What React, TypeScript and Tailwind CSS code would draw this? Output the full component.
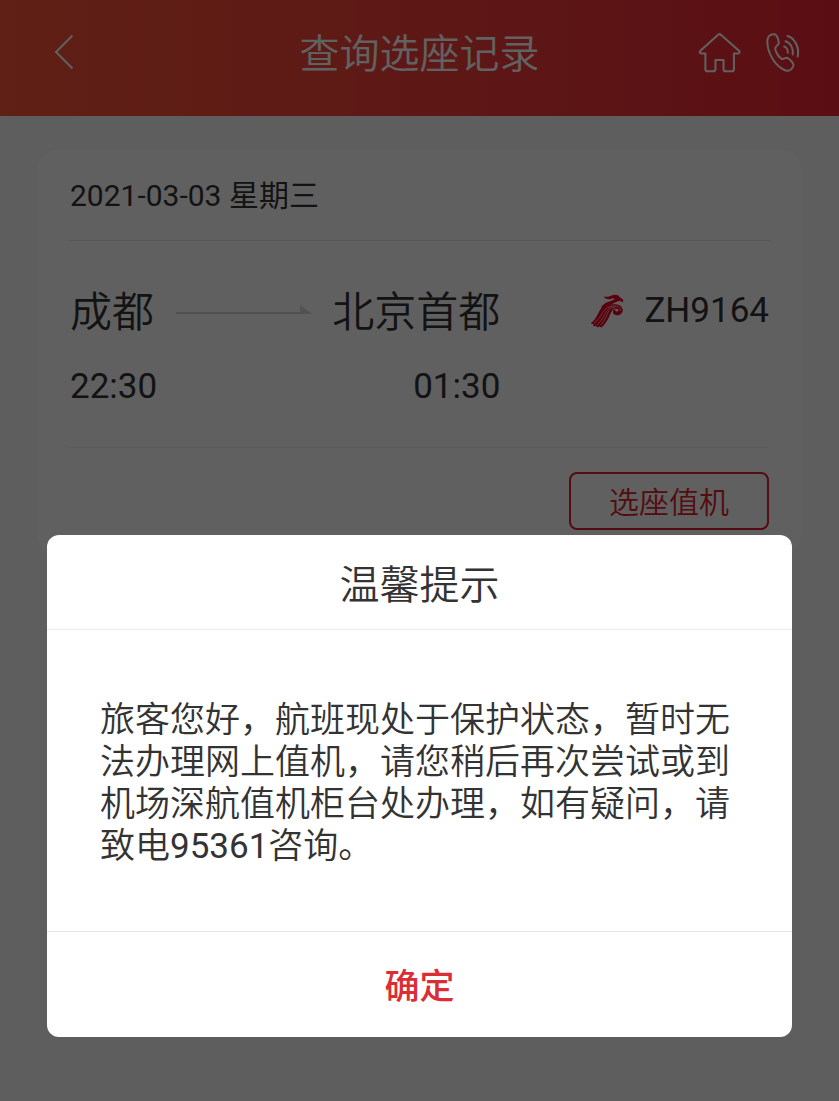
import React, { useState } from 'react';

function BackIcon() {
  return (
    <svg className="h-9 w-5" viewBox="0 0 20 36" fill="none" stroke="currentColor" strokeWidth="2">
      <path d="M18.5 1.5 2 18l16.500 16.500" />
    </svg>
  );
}

function HomeIcon() {
  return (
    <svg className="h-[41px] w-[43px]" viewBox="56 92 128 122" fill="none" stroke="currentColor" strokeWidth="6" strokeLinejoin="round">
      <path d="M116 100Q120 96.500 124 100L178 148Q181 151 179 154Q178 156 174 156H163V202Q163 209 156 209H139Q132 209 132 202V175H108V202Q108 209 101 209H85Q78 209 78 202V156H67Q63 156 62 154Q60 151 63 148Z" />
    </svg>
  );
}

function PhoneIcon() {
  return (
    <svg className="h-[41px] w-[37px]" viewBox="256 92 112 122" fill="none" stroke="currentColor" strokeWidth="6" strokeLinecap="round" strokeLinejoin="round">
      <path d="M271 101C277 97 287 97 290 101C294 107 298 118 298 124C298 131 287 133 287 141C287 151 297 166 306 172C313 176 318 166 325 170C331 173 340 183 342 189C344 196 335 206 328 208C319 211 301 200 288 185C274 168 264 143 263 122C263 112 264 105 271 101Z" />
      <path d="M314 135C321 137 326 145 325 154" />
      <path d="M318 119C333 123 343 141 340 159" />
      <path d="M324 103C346 109 361 139 355 165" />
    </svg>
  );
}

function AirlineLogo() {
  return (
    <svg className="h-[35px] w-[34px]" viewBox="64 64 104 104" fill="none" role="img" aria-label="深圳航空">
      <g fill="#e60020">
        <path d="M106 69C114 73 122 70 130 67C141 63 152 64 154 72L166 80L164 88L156 84C149 83 144 87 138 90C127 96 114 98 106 106L98 104C103 93 116 87 128 84C134 82 138 80 139 77C133 74 127 80 118 78C112 77 108 74 106 69Z" />
        <path d="M98 106C108 96 124 93 142 94C156 95 165 103 164 113C163 124 151 131 140 126C132 122 132 112 140 109L143 115C148 117 152 115 151 111C148 106 138 107 133 112C126 120 125 130 118 141C112 151 106 159 98 165L93 161L88 165L82 160L75 161L74 155L66 152C80 144 88 121 98 106Z" />
      </g>
      <g stroke="#fff" strokeWidth="2" strokeLinecap="round">
        <path d="M136 99C120 100 110 108 103 119C96 132 88 143 76 152" />
        <path d="M140 103C124 104 116 112 110 123C103 137 95 149 85 157" />
        <path d="M138 99C149 98 158 105 158 113" />
        <path d="M122 114C115 123 113 141 97 157" />
      </g>
    </svg>
  );
}

function RouteArrow() {
  return (
    <div className="flex flex-1 items-center">
      <div className="h-[2px] flex-1 bg-[#d6d6d6]" />
      <svg className="-ml-px h-5 w-3" viewBox="0 0 12 20" fill="#d6d6d6">
        <path d="M0 2 12 11H0Z" />
      </svg>
    </div>
  );
}

function Header() {
  return (
    <header className="flex h-[116px] items-center bg-linear-to-r from-[#fa5438] via-[#f54039] to-[#ed2535] px-[37px] pb-3 text-white">
      <div className="flex flex-1">
        <button type="button" aria-label="返回" className="ml-[17px]">
          <BackIcon />
        </button>
      </div>
      <h1 className="pt-1.5 text-[40px] leading-[60px] font-[350]">查询选座记录</h1>
      <div className="flex flex-1 justify-end gap-6">
        <button type="button" aria-label="首页">
          <HomeIcon />
        </button>
        <button type="button" aria-label="客服电话">
          <PhoneIcon />
        </button>
      </div>
    </header>
  );
}

function FlightCard() {
  return (
    <section className="mx-[37px] mt-[34px] rounded-[20px] bg-[#fcfcfc] px-[33px] pb-6 text-[#333]">
      <p className="border-b border-[#e2e2e2] pt-0.5 text-[30px] leading-[88px]">2021-03-03 星期三</p>

      <div className="flex items-start border-b border-[#ececec] pt-[42px] pb-10">
        <div className="flex-1">
          <div className="flex text-[42px] leading-[60px] font-[350]">
            <span className="mr-[22px]">成都</span>
            <RouteArrow />
            <span className="ml-5">北京首都</span>
          </div>
          <div className="mt-6 flex justify-between text-[35px] leading-10">
            <time>22:30</time>
            <time>01:30</time>
          </div>
        </div>
        <div className="ml-[90px] flex h-14 items-center gap-5 text-[35px]">
          <AirlineLogo />
          <span>ZH9164</span>
        </div>
      </div>

      <div className="flex justify-end pt-6">
        <button type="button" className="h-[58px] w-[200px] rounded-lg border-2 border-[#d9232e] pt-0.5 text-[30px] font-[350] text-[#d9232e]">
          选座值机
        </button>
      </div>
    </section>
  );
}

function NoticeDialog({ onClose }: { onClose: () => void }) {
  return (
    <div className="fixed inset-0 flex items-end bg-black/62 px-[47px] pb-16">
      <div role="dialog" aria-modal="true" aria-labelledby="notice-title" className="w-full rounded-xl bg-white text-[#333]">
        <h2 id="notice-title" className="border-b border-[#ebebeb] pt-2 text-center text-[40px] leading-[86px] font-[350]">
          温馨提示
        </h2>
        <p className="px-[53px] pt-[70px] pb-[63px] font-[Roboto,'Noto_Sans_CJK_SC_DemiLight','Noto_Sans_CJK_SC',sans-serif] text-[35px] leading-[42px]">
          旅客您好，航班现处于保护状态，暂时无法办理网上值机，请您稍后再次尝试或到机场深航值机柜台处办理，如有疑问，请致电95361咨询。
        </p>
        <button
          type="button"
          onClick={onClose}
          className="h-[106px] w-full border-t border-[#e5e5e5] pt-2 text-[35px] font-medium text-[#dc2d37]"
        >
          确定
        </button>
      </div>
    </div>
  );
}

export default function App() {
  const [open, setOpen] = useState(true);

  return (
    <div className="min-h-screen bg-[#f7f7f7] font-[Roboto,'Noto_Sans_CJK_SC',sans-serif]" lang="zh-CN">
      <Header />
      <main>
        <FlightCard />
      </main>
      {open && <NoticeDialog onClose={() => setOpen(false)} />}
    </div>
  );
}
